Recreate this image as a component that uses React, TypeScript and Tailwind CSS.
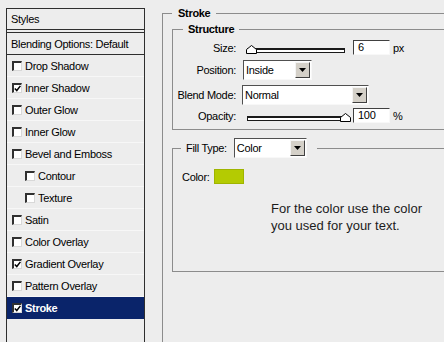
import React from 'react';

type StyleRow = { label: string; checked: boolean; indent?: boolean; selected?: boolean };

const styleRows: StyleRow[] = [
  { label: 'Drop Shadow', checked: false },
  { label: 'Inner Shadow', checked: true },
  { label: 'Outer Glow', checked: false },
  { label: 'Inner Glow', checked: false },
  { label: 'Bevel and Emboss', checked: false },
  { label: 'Contour', checked: false, indent: true },
  { label: 'Texture', checked: false, indent: true },
  { label: 'Satin', checked: false },
  { label: 'Color Overlay', checked: false },
  { label: 'Gradient Overlay', checked: true },
  { label: 'Pattern Overlay', checked: false },
  { label: 'Stroke', checked: true, selected: true },
];

function CheckBox({ checked }: { checked: boolean }) {
  return (
    <span className="w-[10px] h-[10px] shrink-0 bg-white border-t-2 border-l-2 border-t-[#303030] border-l-[#303030] border-b border-r border-b-[#d8d8d8] border-r-[#d8d8d8] flex items-center justify-center">
      {checked && (
        <svg width="7" height="7" viewBox="0 0 7 7">
          <path d="M0.8 3.4 L2.8 5.5 L6.4 0.9" fill="none" stroke="#000" strokeWidth="1.5" />
        </svg>
      )}
    </span>
  );
}

function ArrowButton() {
  return (
    <span className="w-[15px] h-full shrink-0 bg-[#d4d0c8] border-t border-l border-t-[#f4f4f4] border-l-[#f4f4f4] border-b border-r border-b-[#404040] border-r-[#404040] flex items-center justify-center">
      <svg width="7" height="4" viewBox="0 0 7 4">
        <path d="M0 0 H7 L3.5 4 Z" fill="#000" />
      </svg>
    </span>
  );
}

function Dropdown({ value, width }: { value: string; width: string }) {
  return (
    <div
      className={`${width} h-[20px] flex bg-white border-t border-l border-t-[#505050] border-l-[#505050] border-b border-r border-b-[#f8f8f8] border-r-[#f8f8f8] pr-[1px] py-[1px]`}
    >
      <span className="flex-1 pl-[2px] flex items-center">{value}</span>
      <ArrowButton />
    </div>
  );
}

function NumberBox({ value }: { value: string }) {
  return (
    <div className="w-[37px] h-[15px] bg-white border-t border-l border-t-[#404040] border-l-[#404040] border-b border-r border-b-[#f8f8f8] border-r-[#f8f8f8] pl-[4px] flex items-center leading-none">
      {value}
    </div>
  );
}

function Slider({ at }: { at: 'start' | 'end' }) {
  return (
    <div className="relative w-[111px] h-full flex items-end pl-[5px] pr-[8px]">
      <div className="flex-1 h-[5px] mb-[2px] bg-white border-t-2 border-l border-b border-r border-[#1a1a1a]" />
      <svg
        width="11"
        height="9"
        viewBox="0 0 11 9"
        className={`absolute bottom-[1px] ${at === 'start' ? 'left-[4px]' : 'left-[98px]'}`}
      >
        <path d="M0.5 8.5 V4.5 L5.5 0.5 L10.5 4.5 V8.5 Z" fill="#fff" stroke="#000" />
      </svg>
    </div>
  );
}

function Label({ children }: { children: React.ReactNode }) {
  return <span className="w-[64px] text-right pr-[1px] shrink-0">{children}</span>;
}

export default function App() {
  return (
    <div
      className="w-[444px] h-[342px] bg-[#ededed] flex overflow-hidden text-[11px] leading-[14px] tracking-[-0.3px] text-black"
      style={{ fontFamily: '"Liberation Sans", Arial, sans-serif' }}
    >
      {/* Styles list */}
      <div className="w-[145px] shrink-0 pl-[6px] pt-[8px] flex">
        <div className="flex-1 border-l border-t border-r border-[#2e2e2e] flex flex-col">
          <div className="h-[20px] flex items-center pl-[4px]">Styles</div>
          <div className="h-[4px] border-t border-b border-[#2e2e2e]" />
          <div className="h-[22px] flex items-center pl-[4px] border-b border-[#2e2e2e]">
            Blending Options: Default
          </div>
          {styleRows.map((row) => (
            <div
              key={row.label}
              className={`h-[22px] flex items-center gap-[3px] border-b ${row.indent ? 'pl-[18px]' : 'pl-[5px]'} ${
                row.selected ? 'bg-[#0a246a] text-white font-bold border-[#0a246a]' : 'border-[#f7f7f7]'
              }`}
            >
              <CheckBox checked={row.checked} />
              <span>{row.label}</span>
            </div>
          ))}
        </div>
      </div>

      {/* Stroke settings */}
      <div className="flex-1 min-w-0">
        <fieldset className="ml-[17px] mt-[6px] w-[320px] h-[400px] border border-[#8c8c8c] pl-[9px] min-w-0">
          <legend className="px-[6px] font-bold">Stroke</legend>

          <fieldset className="mt-[2px] w-[300px] border border-[#8c8c8c] pb-[6px] min-w-0">
            <legend className="ml-[10px] px-[5px] font-bold">Structure</legend>

            <div className="mt-[4px] h-[15px] flex items-center">
              <Label>Size:</Label>
              <div className="ml-[5px] h-full flex items-center">
                <Slider at="start" />
                <NumberBox value="6" />
                <span className="ml-[3px]">px</span>
              </div>
            </div>

            <div className="mt-[5px] h-[20px] flex items-center">
              <Label>Position:</Label>
              <div className="ml-[6px]">
                <Dropdown value="Inside" width="w-[69px]" />
              </div>
            </div>

            <div className="mt-[5px] h-[20px] flex items-center">
              <Label>Blend Mode:</Label>
              <div className="ml-[5px]">
                <Dropdown value="Normal" width="w-[127px]" />
              </div>
            </div>

            <div className="mt-[3px] h-[15px] flex items-center">
              <Label>Opacity:</Label>
              <div className="ml-[5px] h-full flex items-center">
                <Slider at="end" />
                <NumberBox value="100" />
                <span className="ml-[3px]">%</span>
              </div>
            </div>
          </fieldset>

          <fieldset className="mt-[8px] w-[300px] border border-[#8c8c8c] pb-[37px] min-w-0">
            <legend className="ml-[8px] pl-[5px] pr-[10px]">
              <div className="flex items-center">
                <span>Fill Type:</span>
                <div className="ml-[7px]">
                  <Dropdown value="Color" width="w-[73px]" />
                </div>
              </div>
            </legend>

            <div className="mt-[11px] pl-[9px] flex items-center">
              <span>Color:</span>
              <span className="ml-[4px] w-[30px] h-[15px] bg-[#b4cb02] border border-[#9fb400]" />
            </div>

            <p className="mt-[16px] ml-[98px] text-[13px] leading-[17px] tracking-normal text-[#1c1c1c]">
              For the color use the color
              <br />
              you used for your text.
            </p>
          </fieldset>
        </fieldset>
      </div>
    </div>
  );
}
